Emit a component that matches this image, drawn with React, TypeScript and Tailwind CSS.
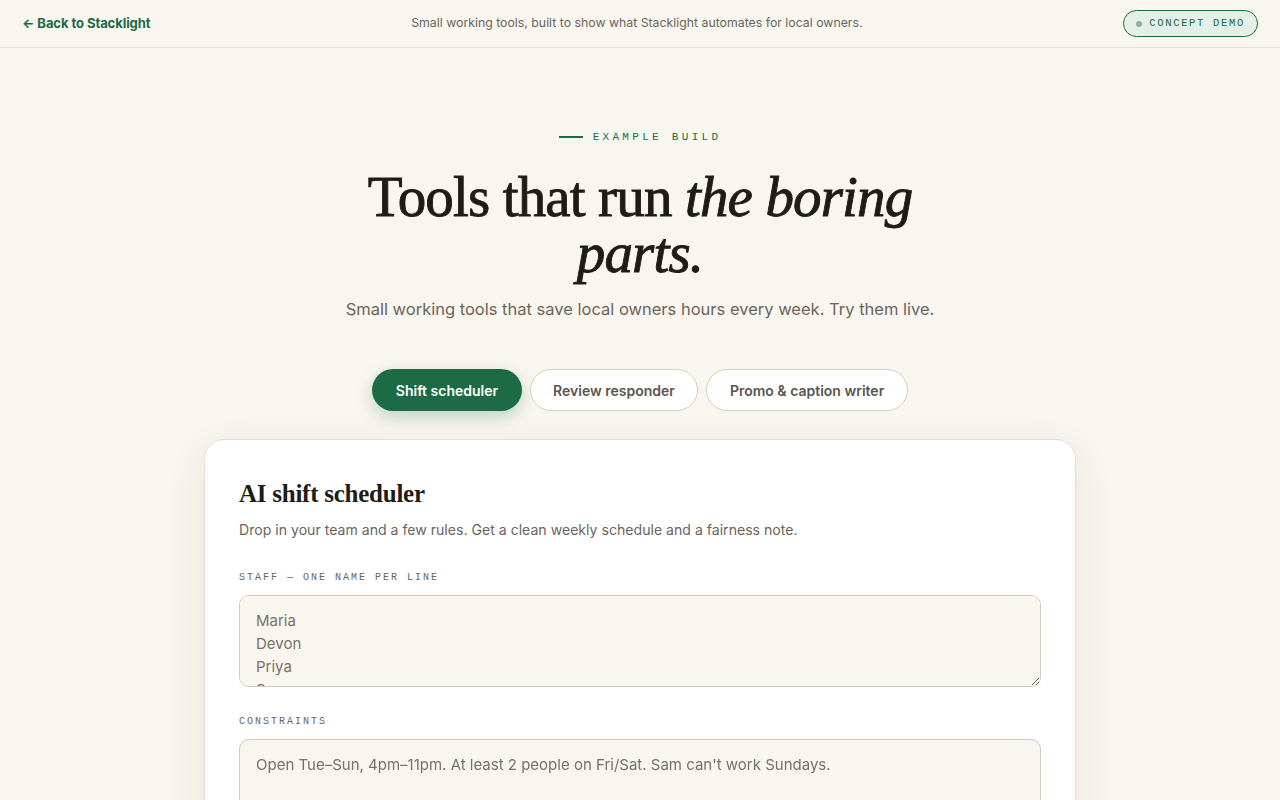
import React from "react";

export default function App() {
  return (
    <div className="min-h-screen bg-[#f9f6ef] text-[#1f1b16] font-['Inter','Noto_Sans',sans-serif]">
      <header className="h-12 border-b border-[#e6e0d4] flex items-center justify-between px-[22px]">
        <a className="text-[13px] font-bold text-[#1d6a47] tracking-[-0.005em] pt-[1px]">← Back to Stacklight</a>
        <div className="text-[12.3px] text-[#6b655c]">Small working tools, built to show what Stacklight automates for local owners.</div>
        <div className="h-[27px] px-[12px] rounded-full border border-[#1d6a47] bg-[#e4efe7] flex items-center gap-[7px]">
          <span className="w-[6px] h-[6px] rounded-full bg-[#8fb29e]" />
          <span className="font-['Liberation_Mono',monospace] text-[10.5px] tracking-[0.16em] text-[#1d6a47]">CONCEPT DEMO</span>
        </div>
      </header>

      <main className="flex flex-col items-center">
        <div className="mt-[81px] flex items-center gap-[10px]">
          <span className="w-6 h-[2px] bg-[#1d6a47]" />
          <span className="font-['Liberation_Mono',monospace] text-[11px] tracking-[0.3em] text-[#1d6a47]">EXAMPLE BUILD</span>
        </div>
        <h1 className="mt-[23px] text-center font-['Liberation_Serif',serif] text-[57px] leading-[56px] tracking-[-0.015em] text-[#1f1b16] max-w-[620px] [-webkit-text-stroke:0.9px_#1f1b16]">
          Tools that run <em className="italic">the boring parts.</em>
        </h1>
        <p className="mt-[16px] text-[16.5px] text-[#6b655c]">Small working tools that save local owners hours every week. Try them live.</p>

        <div className="mt-[48px] flex gap-2">
          <button className="h-[42px] px-[24px] rounded-full bg-[#1d6a47] text-white text-[14px] font-semibold shadow-[0_6px_16px_rgba(29,106,71,0.25)]">Shift scheduler</button>
          <button className="h-[42px] px-[22px] rounded-full bg-white border border-[#d6d0c6] text-[#5b554d] text-[14px] font-semibold">Review responder</button>
          <button className="h-[42px] px-[23px] rounded-full bg-white border border-[#d6d0c6] text-[#5b554d] text-[14px] font-semibold">Promo &amp; caption writer</button>
        </div>

        <section className="mt-[28px] w-[872px] bg-white border border-[#e6e0d4] rounded-[20px] shadow-[0_12px_40px_rgba(60,50,30,0.08)] px-[34px] pt-[38px] pb-[40px]">
          <h2 className="font-['Liberation_Serif',serif] font-bold text-[25px] leading-[32px] text-[#1f1b16] tracking-[-0.01em]">AI shift scheduler</h2>
          <p className="mt-[9px] text-[14.1px] text-[#6b655c]">Drop in your team and a few rules. Get a clean weekly schedule and a fairness note.</p>

          <label className="block mt-[30px] font-['Liberation_Mono',monospace] text-[10px] tracking-[0.2em] text-[#6b655c]">STAFF — ONE NAME PER LINE</label>
          <textarea
            className="mt-[10px] block w-full h-[92px] rounded-[10px] border border-[#cfc9bf] bg-[#f9f6ef] px-[16px] py-[13px] text-[15px] leading-[23px] text-[#78716a] resize-y outline-none"
            defaultValue={"Maria\nDevon\nPriya\nSam\nJordan"}
          />

          <label className="block mt-[27px] font-['Liberation_Mono',monospace] text-[10px] tracking-[0.2em] text-[#6b655c]">CONSTRAINTS</label>
          <textarea
            className="mt-[10px] block w-full h-[92px] rounded-[10px] border border-[#cfc9bf] bg-[#f9f6ef] px-[16px] py-[13px] text-[15px] leading-[23px] text-[#78716a] resize-y outline-none"
            defaultValue={"Open Tue–Sun, 4pm–11pm. At least 2 people on Fri/Sat. Sam can't work Sundays."}
          />
        </section>
        <div className="h-20" />
      </main>
    </div>
  );
}
